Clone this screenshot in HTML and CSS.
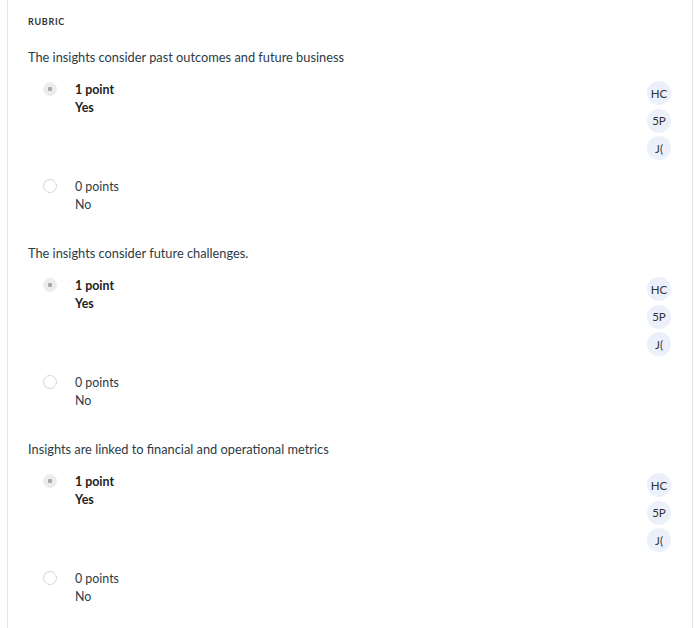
FILE: index.html
```html
<!DOCTYPE html>
<html lang="en">

<head>
    <meta charset="UTF-8">
    <meta name="viewport" content="width=device-width, initial-scale=1.0">
    <title>Rubric</title>

    <link rel="stylesheet" href="styles.css">

</head>

<body>
    <main class="rubric">
        <h2 class="rubric-label">RUBRIC</h2>

        <section class="criterion">
            <h3 class="criterion-title">The insights consider past outcomes and future business</h3>
            <div class="criterion-body">
                <ul class="ratings">
                    <li class="rating selected">
                        <span class="radio"></span>
                        <div class="rating-text">
                            <div>1 point</div>
                            <div>Yes</div>
                        </div>
                    </li>
                    <li class="rating">
                        <span class="radio"></span>
                        <div class="rating-text">
                            <div>0 points</div>
                            <div>No</div>
                        </div>
                    </li>
                </ul>
                <div class="graders">
                    <span class="avatar">HC</span>
                    <span class="avatar">5P</span>
                    <span class="avatar">J(</span>
                </div>
            </div>
        </section>

        <section class="criterion">
            <h3 class="criterion-title">The insights consider future challenges.</h3>
            <div class="criterion-body">
                <ul class="ratings">
                    <li class="rating selected">
                        <span class="radio"></span>
                        <div class="rating-text">
                            <div>1 point</div>
                            <div>Yes</div>
                        </div>
                    </li>
                    <li class="rating">
                        <span class="radio"></span>
                        <div class="rating-text">
                            <div>0 points</div>
                            <div>No</div>
                        </div>
                    </li>
                </ul>
                <div class="graders">
                    <span class="avatar">HC</span>
                    <span class="avatar">5P</span>
                    <span class="avatar">J(</span>
                </div>
            </div>
        </section>

        <section class="criterion">
            <h3 class="criterion-title">Insights are linked to financial and operational metrics</h3>
            <div class="criterion-body">
                <ul class="ratings">
                    <li class="rating selected">
                        <span class="radio"></span>
                        <div class="rating-text">
                            <div>1 point</div>
                            <div>Yes</div>
                        </div>
                    </li>
                    <li class="rating">
                        <span class="radio"></span>
                        <div class="rating-text">
                            <div>0 points</div>
                            <div>No</div>
                        </div>
                    </li>
                </ul>
                <div class="graders">
                    <span class="avatar">HC</span>
                    <span class="avatar">5P</span>
                    <span class="avatar">J(</span>
                </div>
            </div>
        </section>
    </main>
</body>

</html>
```

FILE: styles.css
```css
body {
    margin: 0;
    background: #fff;
    font-family: Lato, "Open Sans", sans-serif;
    color: #2d3b45;
}

.rubric {
    margin-left: 7px;
    width: 686px;
    min-height: 628px;
    box-sizing: border-box;
    border-left: 1px solid #e6e6e6;
    border-right: 1px solid #e6e6e6;
    padding: 16px 21px 0 20px;
}

.rubric-label {
    margin: 0 0 19px;
    font-size: 9px;
    line-height: 12px;
    font-weight: 700;
    letter-spacing: 0.7px;
    color: #333;
}

.criterion {
    margin-bottom: 29px;
}

.criterion-title {
    margin: 0 0 13px;
    font-size: 12.8px;
    line-height: 20px;
    font-weight: 400;
    color: #2d3b45;
}

.criterion-body {
    display: flex;
}

.ratings {
    flex: 1;
    list-style: none;
    margin: 0;
    padding: 1px 0 0 15px;
}

.rating {
    display: flex;
    gap: 18px;
    font-size: 12.4px;
    line-height: 18px;
    color: #2d3b45;
}

.rating + .rating {
    margin-top: 61px;
}

.rating.selected {
    font-weight: 700;
    color: #222;
}

.radio {
    width: 14px;
    height: 14px;
    margin-top: 1px;
    border-radius: 50%;
    border: 1px solid #d4d4d4;
    box-sizing: border-box;
    background: #fff;
    flex-shrink: 0;
}

.selected .radio {
    border-color: #eee;
    background: radial-gradient(circle, #a8a8a8 0 2px, #ececec 2.5px);
}

.graders {
    display: flex;
    flex-direction: column;
    gap: 3.5px;
    margin-top: 1px;
}

.avatar {
    width: 24px;
    height: 24px;
    border-radius: 50%;
    background: #ebf0fa;
    display: flex;
    align-items: center;
    justify-content: center;
    font-size: 11.5px;
    color: #333;
}
```
